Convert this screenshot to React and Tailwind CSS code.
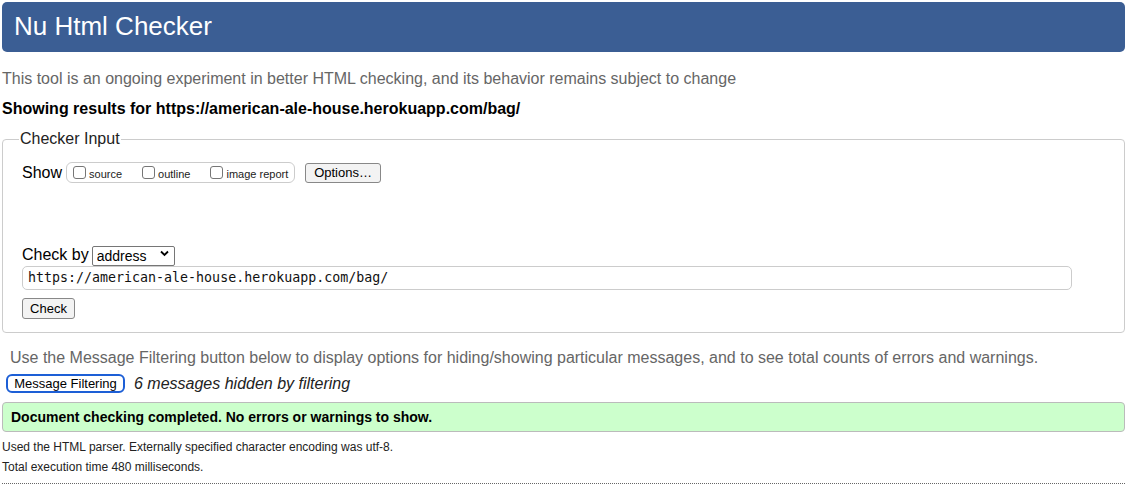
import React from "react";

const sans = { fontFamily: '"Liberation Sans", Arial, sans-serif' };

function Box({ label }) {
  return (
    <label className="flex items-center">
      <span className="inline-block h-[13px] w-[13px] rounded-[3px] border border-[#767676] bg-white"></span>
      <span className="ml-[3px] mt-[3px] text-[11px] text-[#222]">{label}</span>
    </label>
  );
}

export default function App() {
  return (
    <div className="min-h-[488px] w-[1127px] bg-white px-[2px] pt-[2px] text-black" style={sans}>
      <h1 className="flex h-[50px] items-center rounded-[5px] bg-[#3b5e94] pl-[12px] pb-[3px] text-[26px] leading-none text-white">
        Nu Html Checker
      </h1>

      <p className="mt-[18px] text-[16px] leading-[18px] text-[#666]">
        This tool is an ongoing experiment in better HTML checking, and its behavior remains subject to change
      </p>
      <p className="mt-[12px] text-[16px] font-bold leading-[18px]">
        Showing results for https://american-ale-house.herokuapp.com/bag/
      </p>

      <fieldset className="mt-[12px] h-[203px] rounded-[4px] border border-[#ccc] pl-[19px] pr-[20px]">
        <legend className="ml-[-3px] px-[1px] text-[16px] leading-[18px] text-[#222]">Checker Input</legend>

        <div className="mt-[14px] flex items-center">
          <span className="text-[16px] leading-[18px]">Show</span>
          <div className="ml-[4px] flex h-[21px] w-[229px] items-center gap-[20px] rounded-[6px] border border-[#ccc] pl-[6px]">
            <Box label="source" />
            <Box label="outline" />
            <Box label="image report" />
          </div>
          <button className="ml-[10px] h-[20px] w-[76px] rounded-[3px] border border-[#888] bg-[#f3f3f3] text-[13px] leading-none">
            Options…
          </button>
        </div>

        <div className="mt-[60px] flex items-center">
          <span className="mt-[3px] text-[16px] leading-[18px]">Check by</span>
          <div className="relative ml-[3px] h-[20px] w-[83px]">
            <select className="h-[20px] w-[83px] appearance-none rounded-[2px] border border-[#767676] bg-white pl-[4px] text-[14px] leading-none outline-none">
              <option>address</option>
            </select>
            <svg className="pointer-events-none absolute right-[6px] top-[6px]" width="9" height="7" viewBox="0 0 9 7">
              <path d="M1 1.5 L4.5 5 L8 1.5" fill="none" stroke="#000" strokeWidth="1.8" />
            </svg>
          </div>
        </div>

        <div className="mt-[2px] flex h-[24px] w-[1050px] items-center rounded-[5px] border border-[#ccc] pl-[5px] text-[13.3px] text-[#111]" style={{ fontFamily: '"DejaVu Sans Mono", "Liberation Mono", monospace' }}>
          https://american-ale-house.herokuapp.com/bag/
        </div>

        <button className="mt-[8px] h-[21px] w-[53px] rounded-[3px] border border-[#888] bg-[#f3f3f3] text-[13px] leading-none">
          Check
        </button>
      </fieldset>

      <p className="mt-[16px] pl-[8px] text-[16px] leading-[18px] text-[#666]">
        Use the Message Filtering button below to display options for hiding/showing particular messages, and to see total counts of errors and warnings.
      </p>

      <div className="mt-[7px] flex items-center">
        <button className="ml-[4px] h-[19px] w-[119px] rounded-[6px] border-2 border-[#1d5fd6] bg-white text-[13px] leading-none">
          Message Filtering
        </button>
        <span className="ml-[9px] text-[16px] italic leading-[18px] text-[#222]">6 messages hidden by filtering</span>
      </div>

      <div className="mt-[9px] flex h-[30px] items-center rounded-[4px] border border-[#bbb] bg-[#ccffcc] pl-[8px] text-[14px] font-bold">
        Document checking completed. No errors or warnings to show.
      </div>

      <p className="mt-[8px] text-[12px] leading-[14px] text-[#222]">
        Used the HTML parser. Externally specified character encoding was utf-8.
      </p>
      <p className="mt-[6px] text-[12px] leading-[14px] text-[#222]">Total execution time 480 milliseconds.</p>

      <div className="mt-[9px] border-t border-dotted border-[#666]"></div>
    </div>
  );
}
